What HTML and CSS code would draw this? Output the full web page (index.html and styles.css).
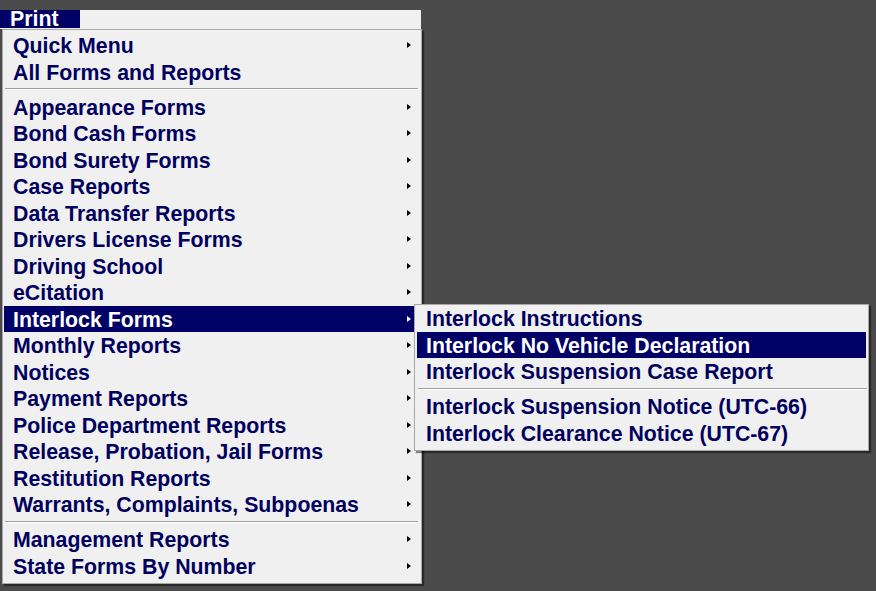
FILE: index.html
```html
<!DOCTYPE html>
<html>
<head>
<meta charset="utf-8">
<title>Print Menu</title>
<link rel="stylesheet" href="styles.css">
</head>
<body>
<div class="screen">
  <div class="menubar">
    <span class="menubar-item active">Print</span>
  </div>
  <div class="menu main-menu">
    <div class="item sub">Quick Menu</div>
    <div class="item">All Forms and Reports</div>
    <div class="sep"></div>
    <div class="item sub">Appearance Forms</div>
    <div class="item sub">Bond Cash Forms</div>
    <div class="item sub">Bond Surety Forms</div>
    <div class="item sub">Case Reports</div>
    <div class="item sub">Data Transfer Reports</div>
    <div class="item sub">Drivers License Forms</div>
    <div class="item sub">Driving School</div>
    <div class="item sub">eCitation</div>
    <div class="item sub open">Interlock Forms
      <div class="menu submenu">
        <div class="item">Interlock Instructions</div>
        <div class="item hot">Interlock No Vehicle Declaration</div>
        <div class="item">Interlock Suspension Case Report</div>
        <div class="sep"></div>
        <div class="item">Interlock Suspension Notice (UTC-66)</div>
        <div class="item">Interlock Clearance Notice (UTC-67)</div>
      </div>
    </div>
    <div class="item sub">Monthly Reports</div>
    <div class="item sub">Notices</div>
    <div class="item sub">Payment Reports</div>
    <div class="item sub">Police Department Reports</div>
    <div class="item sub">Release, Probation, Jail Forms</div>
    <div class="item sub">Restitution Reports</div>
    <div class="item sub">Warrants, Complaints, Subpoenas</div>
    <div class="sep"></div>
    <div class="item sub">Management Reports</div>
    <div class="item sub">State Forms By Number</div>
  </div>
</div>
</body>
</html>
```

FILE: styles.css
```css
html, body {
  margin: 0;
  padding: 0;
  background: #4b4b4b;
  height: 100%;
}

.screen {
  padding-top: 10px;
  font-family: "Liberation Sans", Arial, sans-serif;
  font-weight: bold;
  font-size: 21.3px;
}

.menubar {
  width: 421px;
  height: 19px;
  background: #f0f0f0;
  display: flex;
}

.menubar-item {
  display: block;
  width: 70px;
  padding-left: 10px;
  height: 18px;
  line-height: 18px;
  color: #ffffff;
  background: #000066;
}

.menu {
  background: #f0f0f0;
  border: 1px solid #a8a8a8;
  box-shadow: 2px 2px 1px rgba(0, 0, 0, 0.45);
  color: #00005e;
}

.main-menu {
  width: 412px;
  margin-left: 2px;
  padding: 2px 5px 4px 1px;
}

.item {
  height: 26.5px;
  line-height: 28px;
  padding-left: 9px;
  white-space: nowrap;
  position: relative;
}

.item.sub::after {
  content: "";
  position: absolute;
  right: 5px;
  top: 10px;
  width: 0;
  height: 0;
  border-top: 3.5px solid transparent;
  border-bottom: 3.5px solid transparent;
  border-left: 4px solid #000000;
}

.item.open,
.item.hot {
  background: #000066;
  color: #ffffff;
}

.item.open::after {
  border-left-color: #ffffff;
}

.sep {
  height: 8.5px;
  display: flex;
  flex-direction: column;
  justify-content: center;
  margin: 0 -2px 0 1px;
}

.sep::before {
  content: "";
  display: block;
  height: 1px;
  background: #a0a0a0;
  border-bottom: 1px solid #ffffff;
}

.submenu {
  position: absolute;
  left: 410px;
  top: -2px;
  width: 449px;
  padding: 0.5px 2px 3.5px 2px;
  z-index: 2;
  line-height: 28px;
}

.submenu .item {
  color: #00005e;
  background: transparent;
}

.submenu .item.hot {
  background: #000066;
  color: #ffffff;
}

.submenu .sep {
  margin: 0 -1px 0 1px;
}
```
